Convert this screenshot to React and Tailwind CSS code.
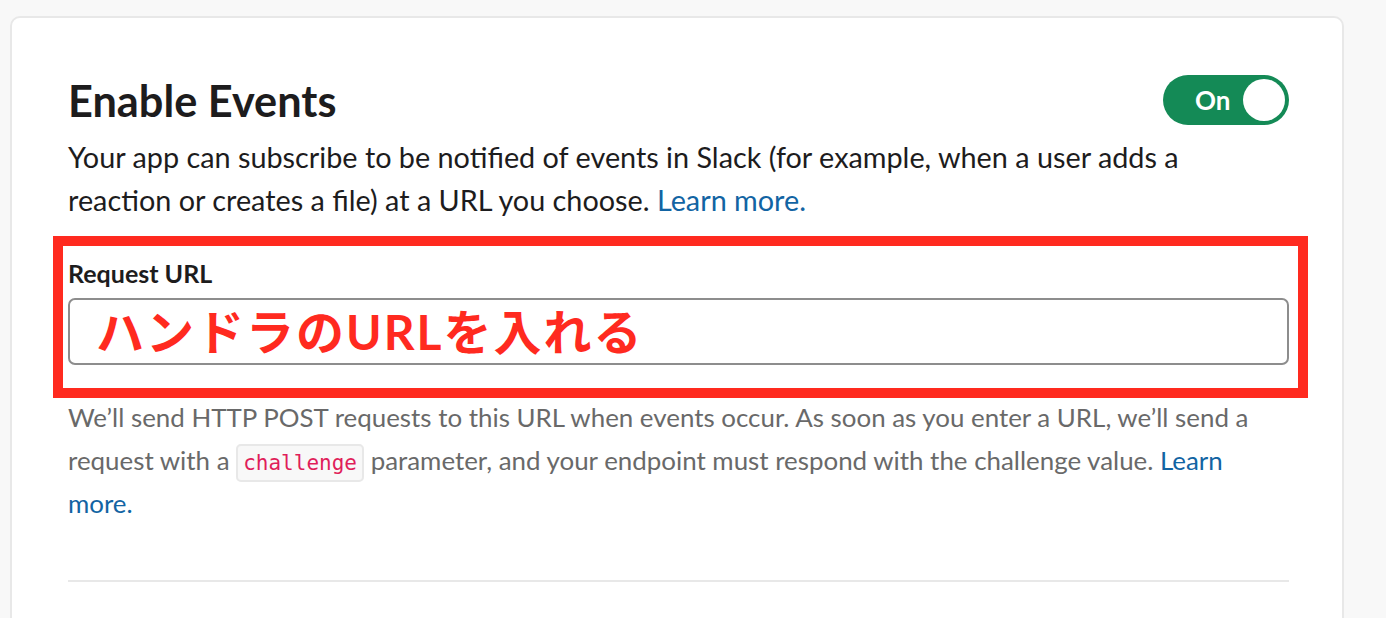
export default function App() {
  return (
    <div className="h-[618px] overflow-hidden bg-[#f8f8f8] pt-[16px] pl-[10px] pr-[42px] font-['Lato','Noto_Sans','Noto_Sans_CJK_JP',sans-serif]">
      <div className="bg-white border-2 border-[#e8e8e8] rounded-[10px] pl-[56px] pr-[53px] pt-[54px] pb-[200px]">
        {/* Заголовок и переключатель */}
        <div className="flex items-center justify-between">
          <h2 className="text-[43.3px] font-bold text-[#1d1c1d] leading-[56px]">Enable Events</h2>
          <div className="w-[126px] h-[50px] rounded-full bg-[#148a56] flex items-center justify-between pl-[32px] pr-[4px]">
            <span className="text-white font-bold text-[26px] leading-none">On</span>
            <span className="w-[42px] h-[42px] rounded-full bg-white block"></span>
          </div>
        </div>

        <p className="text-[28.8px] leading-[43px] text-[#1d1c1d] mt-[8px]">
          Your app can subscribe to be notified of events in Slack (for example, when a user adds a reaction or creates a file) at a URL you choose.{' '}
          <a className="text-[#1264a3]">Learn more.</a>
        </p>

        {/* Поле Request URL в красной рамке */}
        <div className="-ml-[15px] -mr-[19px] mt-[14px] border-[10px] border-[#ff2a1f] pl-[5px] pr-[9px] pt-[7px] pb-[23px]">
          <div className="text-[25px] font-bold text-[#1d1c1d] leading-[40px]">Request URL</div>
          <div className="mt-[5px] h-[67px] border-2 border-[#8d8d8d] rounded-[7px] flex items-center pl-[26px]">
            <span className="text-[#ff2a1f] font-bold text-[48px] tracking-[2px] leading-none">ハンドラのURLを入れる</span>
          </div>
        </div>

        <p className="text-[25.9px] leading-[43px] text-[#696969] mt-[-2px]">
          We’ll send HTTP POST requests to this URL when events occur. As soon as you enter a URL, we’ll send a request with a{' '}
          <code className="font-['DejaVu_Sans_Mono',monospace] text-[21px] leading-none text-[#e01e5a] bg-[#f8f8f8] border-2 border-[#e8e8e8] rounded-[5px] px-[5px] py-[5px]">challenge</code>{' '}
          parameter, and your endpoint must respond with the challenge value.{' '}
          <a className="text-[#1264a3]">Learn more.</a>
        </p>

        <div className="mt-[55px] border-t-2 border-[#e8e8e8]"></div>
      </div>
    </div>
  )
}
